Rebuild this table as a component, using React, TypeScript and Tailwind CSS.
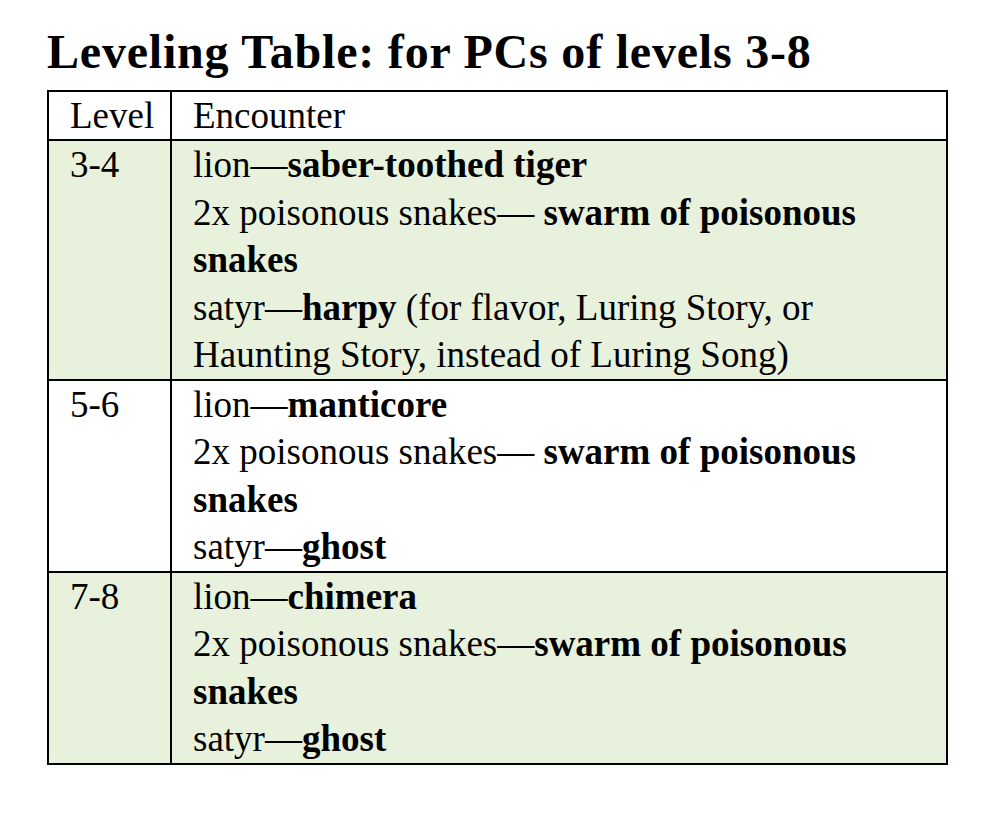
const rows: { level: string; green: boolean; lines: React.ReactNode[] }[] = [
  {
    level: '3-4',
    green: true,
    lines: [
      <>lion—<b>saber-toothed tiger</b></>,
      <>2x poisonous snakes— <b>swarm of poisonous</b><br /><b>snakes</b></>,
      <>satyr—<b>harpy</b> (for flavor, Luring Story, or<br />Haunting Story, instead of Luring Song)</>,
    ],
  },
  {
    level: '5-6',
    green: false,
    lines: [
      <>lion—<b>manticore</b></>,
      <>2x poisonous snakes— <b>swarm of poisonous</b><br /><b>snakes</b></>,
      <>satyr—<b>ghost</b></>,
    ],
  },
  {
    level: '7-8',
    green: true,
    lines: [
      <>lion—<b>chimera</b></>,
      <>2x poisonous snakes—<b>swarm of poisonous</b><br /><b>snakes</b></>,
      <>satyr—<b>ghost</b></>,
    ],
  },
];

export default function App() {
  return (
    <div className="min-h-screen bg-white px-[47px] pt-[22px] text-black font-['Liberation_Serif',serif]">
      <h1 className="text-[48px] font-bold leading-[60px] tracking-[0.8px]">Leveling Table: for PCs of levels 3-8</h1>
      <table className="mt-[8px] w-[901px] border-collapse border-2 border-black text-[37px] leading-[47.5px]">
        <thead>
          <tr>
            <th className="w-[123px] border-2 border-black pl-[21px] text-left font-normal align-top leading-[47px]">Level</th>
            <th className="border-2 border-black pl-[21px] text-left font-normal align-top leading-[47px]">Encounter</th>
          </tr>
        </thead>
        <tbody>
          {rows.map((row) => (
            <tr key={row.level} className={row.green ? 'bg-[#e8f1dc]' : 'bg-white'}>
              <td className="border-2 border-black pl-[21px] align-top">{row.level}</td>
              <td className="border-2 border-black pl-[21px] align-top">
                {row.lines.map((line, i) => (
                  <div key={i}>{line}</div>
                ))}
              </td>
            </tr>
          ))}
        </tbody>
      </table>
    </div>
  );
}
